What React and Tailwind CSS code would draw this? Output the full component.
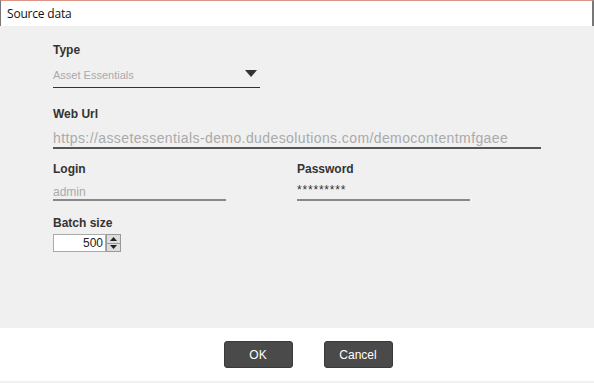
export default function App() {
    return (
        <div className="w-[594px] h-[383px] flex flex-col bg-[#f0f0f0] font-['Liberation_Sans',Arial,sans-serif] overflow-hidden">
            {/* title bar */}
            <div className="h-[26px] bg-white border-t border-t-[#dc9585] border-l border-l-[#777] border-r-2 border-r-[#777] flex items-center px-[6px]">
                <span className="text-[12px] text-[#111] font-['Open_Sans',sans-serif] tracking-[-0.2px]">Source data</span>
            </div>

            {/* form */}
            <div className="flex-1 pl-[53px] pt-[16px] flex flex-col">
                <div className="text-[12px] font-bold text-[#333] leading-[16px]">Type</div>
                <div className="mt-[8px] w-[207px] h-[22px] border-b border-[#333] flex items-center justify-between">
                    <span className="text-[11px] text-[#aaa] pb-[2px]">Asset Essentials</span>
                    <svg width="12" height="8" viewBox="0 0 12 8" className="mr-[3px] mb-[6px]">
                        <path d="M0 0 L12 0 L6 7 Z" fill="#333" />
                    </svg>
                </div>

                <div className="mt-[18px] text-[12px] font-bold text-[#333] leading-[16px]">Web Url</div>
                <div className="mt-[6px] w-[488px] h-[21px] border-b-2 border-[#555] flex items-end">
                    <span className="text-[14px] text-[#aaa] leading-[16px] pb-[1px] tracking-[0.4px]">https://assetessentials-demo.dudesolutions.com/democontentmfgaee</span>
                </div>

                <div className="mt-[12px] flex">
                    <div className="w-[244px]">
                        <div className="text-[12px] font-bold text-[#333] leading-[16px]">Login</div>
                        <div className="mt-[6px] w-[173px] h-[18px] border-b-2 border-[#888] flex items-end">
                            <span className="text-[12px] text-[#aaa] leading-[14px]">admin</span>
                        </div>
                    </div>
                    <div>
                        <div className="text-[12px] font-bold text-[#333] leading-[16px]">Password</div>
                        <div className="mt-[6px] w-[173px] h-[18px] border-b-2 border-[#888] flex items-end">
                            <span className="text-[12px] text-[#333] leading-[14px] pb-[2px] tracking-[0.8px]">*********</span>
                        </div>
                    </div>
                </div>

                <div className="mt-[14px] text-[12px] font-bold text-[#333] leading-[16px]">Batch size</div>
                <div className="mt-[3px] flex h-[18px]">
                    <div className="w-[53px] h-[18px] bg-white border border-[#aaa] flex items-center justify-end pr-[2px]">
                        <span className="text-[12px] text-[#222]">500</span>
                    </div>
                    <div className="w-[15px] h-[18px] flex flex-col border border-[#999] bg-[#ddd]">
                        <div className="flex-1 flex items-center justify-center border-b border-[#999]">
                            <svg width="7" height="4" viewBox="0 0 7 4"><path d="M0 4 L3.5 0 L7 4 Z" fill="#222" /></svg>
                        </div>
                        <div className="flex-1 flex items-center justify-center">
                            <svg width="7" height="4" viewBox="0 0 7 4"><path d="M0 0 L3.5 4 L7 0 Z" fill="#222" /></svg>
                        </div>
                    </div>
                </div>
            </div>

            {/* footer */}
            <div className="h-[53px] bg-white flex items-center justify-center gap-[31px] pl-[22px]">
                <button className="w-[69px] h-[27px] bg-[#4a4a4a] rounded-[3px] border border-[#3a3a3a] text-white text-[12px]">OK</button>
                <button className="w-[69px] h-[27px] bg-[#4a4a4a] rounded-[3px] border border-[#3a3a3a] text-white text-[12px]">Cancel</button>
            </div>
            <div className="h-[2px] bg-[#f0f0f0]" />
        </div>
    );
}
